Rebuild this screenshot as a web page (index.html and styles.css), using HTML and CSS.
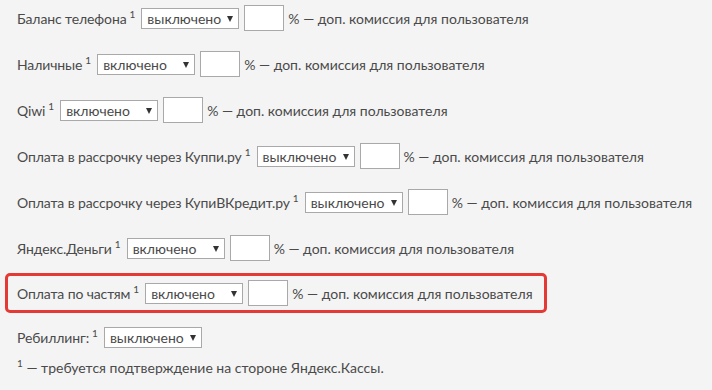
FILE: index.html
```html
<!DOCTYPE html>
<html lang="ru">
<head>
    <meta charset="UTF-8">
    <meta name="viewport" content="width=device-width, initial-scale=1.0">
    <title>Способы оплаты</title>
    <link rel="stylesheet" href="styles.css">
</head>
<body>

<div class="methods">
    <div class="row">
        <span class="name">Баланс телефона<sup>1</sup></span>
        <span class="select"><select><option>выключено</option><option>включено</option></select></span>
        <input type="text" class="fee">
        <span class="note">% — доп. комиссия для пользователя</span>
    </div>
    <div class="row">
        <span class="name">Наличные<sup>1</sup></span>
        <span class="select"><select><option>включено</option><option>выключено</option></select></span>
        <input type="text" class="fee">
        <span class="note">% — доп. комиссия для пользователя</span>
    </div>
    <div class="row">
        <span class="name">Qiwi<sup>1</sup></span>
        <span class="select"><select><option>включено</option><option>выключено</option></select></span>
        <input type="text" class="fee">
        <span class="note">% — доп. комиссия для пользователя</span>
    </div>
    <div class="row">
        <span class="name">Оплата в рассрочку через Куппи.ру<sup>1</sup></span>
        <span class="select"><select><option>выключено</option><option>включено</option></select></span>
        <input type="text" class="fee">
        <span class="note">% — доп. комиссия для пользователя</span>
    </div>
    <div class="row">
        <span class="name">Оплата в рассрочку через КупиВКредит.ру<sup>1</sup></span>
        <span class="select"><select><option>выключено</option><option>включено</option></select></span>
        <input type="text" class="fee">
        <span class="note">% — доп. комиссия для пользователя</span>
    </div>
    <div class="row">
        <span class="name">Яндекс.Деньги<sup>1</sup></span>
        <span class="select"><select><option>включено</option><option>выключено</option></select></span>
        <input type="text" class="fee">
        <span class="note">% — доп. комиссия для пользователя</span>
    </div>
    <div class="row row-marked">
        <span class="name">Оплата по частям<sup>1</sup></span>
        <span class="select"><select><option>включено</option><option>выключено</option></select></span>
        <input type="text" class="fee">
        <span class="note">% — доп. комиссия для пользователя</span>
    </div>
    <div class="row row-small">
        <span class="name">Ребиллинг:<sup>1</sup></span>
        <span class="select"><select><option>выключено</option><option>включено</option></select></span>
    </div>
    <p class="footnote"><sup>1</sup> — требуется подтверждение на стороне Яндекс.Кассы.</p>
</div>

</body>
</html>
```

FILE: styles.css
```css
body {
    margin: 0;
    background: #f4f4f4;
    color: #4a4a4a;
    font-family: Lato, "Liberation Sans", Arial, sans-serif;
    font-size: 14px;
}
.methods {
    padding: 5px 0 0 17px;
}
.row {
    display: flex;
    align-items: center;
    gap: 5px;
    height: 26px;
    margin-bottom: 20px;
}
.row sup {
    margin-left: 3px;
    font-size: 10px;
    vertical-align: 6px;
    line-height: 0;
    letter-spacing: 0;
}
.name {
    margin-right: 1px;
    letter-spacing: -0.12px;
}
.select {
    position: relative;
    display: inline-block;
}
.select select {
    appearance: none;
    -webkit-appearance: none;
    width: 98px;
    height: 21px;
    padding: 0 0 0 5px;
    border: 1px solid #a9a9a9;
    border-radius: 0;
    background: #fff;
    color: #4a4a4a;
    font-family: inherit;
    font-size: 14px;
}
.select::after {
    content: "";
    position: absolute;
    right: 6px;
    top: 8px;
    border-left: 3.5px solid transparent;
    border-right: 3.5px solid transparent;
    border-top: 6px solid #333;
    pointer-events: none;
}
.fee {
    width: 40px;
    height: 26px;
    box-sizing: border-box;
    border: 1px solid #a9a9a9;
    background: #fff;
    padding: 0 4px;
    font-family: inherit;
    font-size: 14px;
}
.note {
    margin-left: -1px;
}
.row-marked {
    display: inline-flex;
    margin: -8px 0 14px -12px;
    padding: 4px 11px 4px 9px;
    border: 3px solid #e53935;
    border-radius: 5px;
}
.row-small {
    height: 21px;
    margin-bottom: 12px;
}
.footnote {
    margin: 0;
    line-height: 16px;
}
.footnote sup {
    font-size: 10px;
    vertical-align: 6px;
    line-height: 0;
}
```
